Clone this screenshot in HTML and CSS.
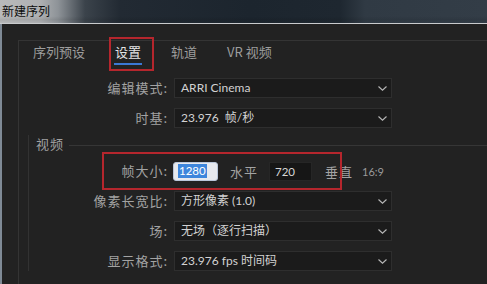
FILE: index.html
```html
<!DOCTYPE html>
<html lang="zh">
<head>
<meta charset="utf-8">
<title>新建序列</title>
<link rel="stylesheet" href="styles.css">
</head>
<body>
<div class="window">
  <div class="titlebar">新建序列</div>
  <div class="dialog">
    <div class="panel">
      <div class="tabs">
        <span class="tab">序列预设</span>
        <span class="tab active">设置</span>
        <span class="tab">轨道</span>
        <span class="tab">VR 视频</span>
      </div>
      <div class="form">
        <div class="row">
          <span class="label">编辑模式:</span>
          <div class="select"><span class="val">ARRI Cinema</span><svg class="chev" width="9" height="5" viewBox="0 0 9 5"><polyline points="0.5,0.5 4.5,4.2 8.5,0.5" fill="none" stroke="#b8b8b8" stroke-width="1.1"/></svg></div>
        </div>
        <div class="row">
          <span class="label">时基:</span>
          <div class="select"><span class="val">23.976&nbsp; 帧/秒</span><svg class="chev" width="9" height="5" viewBox="0 0 9 5"><polyline points="0.5,0.5 4.5,4.2 8.5,0.5" fill="none" stroke="#b8b8b8" stroke-width="1.1"/></svg></div>
        </div>
        <div class="group">
          <div class="group-head"><span class="group-title">视频</span><i class="rule"></i></div>
          <div class="row grow">
            <span class="label">帧大小:</span>
            <div class="size">
              <span class="num num-active"><span class="sel">1280</span></span>
              <span class="unit u1">水平</span>
              <span class="num num-dark">720</span>
              <span class="unit u2">垂直</span>
              <span class="ratio">16:9</span>
            </div>
          </div>
          <div class="row grow">
            <span class="label">像素长宽比:</span>
            <div class="select"><span class="val">方形像素 (1.0)</span><svg class="chev" width="9" height="5" viewBox="0 0 9 5"><polyline points="0.5,0.5 4.5,4.2 8.5,0.5" fill="none" stroke="#b8b8b8" stroke-width="1.1"/></svg></div>
          </div>
          <div class="row grow">
            <span class="label">场:</span>
            <div class="select"><span class="val">无场（逐行扫描）</span><svg class="chev" width="9" height="5" viewBox="0 0 9 5"><polyline points="0.5,0.5 4.5,4.2 8.5,0.5" fill="none" stroke="#b8b8b8" stroke-width="1.1"/></svg></div>
          </div>
          <div class="row grow">
            <span class="label">显示格式:</span>
            <div class="select"><span class="val">23.976 fps 时间码</span><svg class="chev" width="9" height="5" viewBox="0 0 9 5"><polyline points="0.5,0.5 4.5,4.2 8.5,0.5" fill="none" stroke="#b8b8b8" stroke-width="1.1"/></svg></div>
          </div>
        </div>
      </div>
    </div>
  </div>
  <div class="mark mark-tab"></div>
  <div class="mark mark-size"></div>
</div>
</body>
</html>
```

FILE: styles.css
```css
html, body {
  margin: 0;
  padding: 0;
  background: #222222;
}
body {
  width: 487px;
  height: 284px;
  overflow: hidden;
  font-family: Lato, "Noto Sans CJK SC", sans-serif;
}
.window {
  position: relative;
  height: 284px;
}
.titlebar {
  height: 23px;
  border-bottom: 1px solid #c9cbcd;
  box-sizing: border-box;
  height: 24px;
  padding-left: 2px;
  font-family: "Noto Sans CJK SC", sans-serif;
  font-size: 12px;
  line-height: 21px;
  color: #0c0c0c;
  background:
    linear-gradient(180deg, rgba(255,255,255,0) 0%, rgba(255,255,255,0) 70%, rgba(0,0,0,0.08) 85%, rgba(0,0,0,0) 100%),
    linear-gradient(90deg, #b9babb 0px, #aeb0b2 40px, #8e9398 58px, #3b434b 85px, #222a33 120px, #1c252e 250px, #1e2730 340px, #303a44 365px, #333d47 487px);
}
.dialog {
  height: 260px;
  box-sizing: border-box;
  border-left: 2px solid #7f8a96;
  padding: 16px 0 0 16px;
  background: #222222;
}
.panel {
  height: 100%;
  border-top: 1px solid #343434;
  border-left: 1px solid #343434;
}
.tabs {
  display: flex;
  gap: 28px;
  padding: 2px 0 0 13px;
  font-family: "Noto Sans CJK SC", sans-serif;
  font-size: 13px;
}
.tab {
  line-height: 18px;
  padding: 0 1px 2px;
  border-bottom: 2px solid transparent;
  color: #9d9d9d;
}
.tab.active {
  color: #e4e4e4;
  border-bottom-color: #3b78d4;
}
.form {
  margin-top: 13px;
  display: flex;
  flex-direction: column;
  gap: 10px;
}
.row {
  display: grid;
  grid-template-columns: 149px 218px;
  column-gap: 6px;
  height: 20px;
  align-items: center;
}
.row.grow {
  grid-template-columns: 139px 218px;
}
.label {
  text-align: right;
  font-family: "Noto Sans CJK SC", sans-serif;
  font-size: 13px;
  letter-spacing: 1px;
  line-height: 20px;
  color: #a3a3a3;
  white-space: nowrap;
}
.select {
  height: 20px;
  box-sizing: border-box;
  border: 1px solid #2e2e2e;
  background: #1b1b1b;
  display: flex;
  align-items: center;
  padding-left: 6px;
  color: #d2d2d2;
  font-size: 12px;
  white-space: nowrap;
}
.val {
  line-height: 18px;
}
.chev {
  margin-left: auto;
  margin-right: 4px;
}
.group {
  margin-left: 9px;
  border-left: 1px solid #323232;
  display: flex;
  flex-direction: column;
  gap: 10px;
  margin-top: -3px;
}
.group-head {
  display: flex;
  align-items: center;
  height: 16px;
  padding-left: 7px;
}
.group-title {
  font-family: "Noto Sans CJK SC", sans-serif;
  font-size: 13px;
  color: #a0a0a0;
  letter-spacing: 1px;
}
.rule {
  flex: 1;
  height: 1px;
  margin: 4px 0 0 5px;
  background: #363636;
}
.size {
  display: flex;
  align-items: center;
  height: 20px;
  white-space: nowrap;
}
.num {
  height: 19px;
  box-sizing: border-box;
  display: flex;
  align-items: center;
  font-size: 11.5px;
}
.num-active {
  width: 45px;
  margin-left: -1px;
  padding-left: 4px;
  background: #e7e9ee;
  border: 1px solid #b9c6da;
  border-radius: 3px;
}
.sel {
  background: #3d86dc;
  color: #ffffff;
  line-height: 14px;
  padding: 0 1px;
}
.num-dark {
  width: 43px;
  padding-left: 5px;
  background: #161616;
  border: 1px solid #262626;
  color: #d6d6d6;
  margin-left: 11px;
}
.unit {
  font-family: "Noto Sans CJK SC", sans-serif;
  font-size: 13px;
  color: #a3a3a3;
  letter-spacing: 1px;
}
.u1 { margin-left: 12px; }
.u2 { margin-left: 13px; }
.ratio {
  margin-left: 9px;
  font-size: 11px;
  color: #9a9a9a;
}
.mark {
  position: absolute;
  box-sizing: border-box;
  border: 2px solid #b5262d;
}
.mark-tab {
  left: 109px;
  top: 37px;
  width: 45px;
  height: 34px;
}
.mark-size {
  left: 102px;
  top: 152px;
  width: 240px;
  height: 38px;
}
```
